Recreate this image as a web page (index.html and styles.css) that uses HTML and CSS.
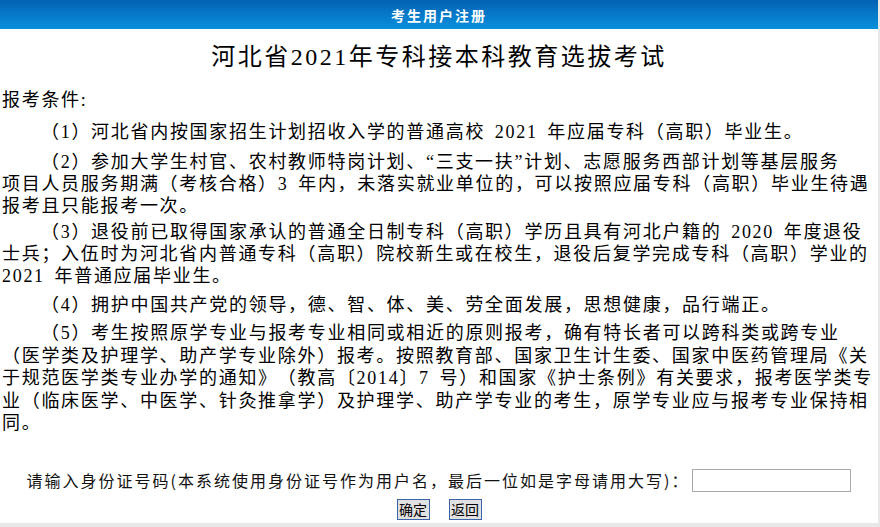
FILE: index.html
```html
<!DOCTYPE html>
<html lang="zh-CN">
<head>
<meta charset="utf-8">
<title>考生用户注册</title>
<link rel="stylesheet" href="styles.css">
</head>
<body>
<div class="page">
  <div class="topbar">考生用户注册</div>
  <h1 class="title">河北省2021年专科接本科教育选拔考试</h1>
  <div class="cond">
    <div class="cond-head">报考条件:</div>
    <p class="p1">（1）河北省内按国家招生计划招收入学的普通高校 2021 年应届专科（高职）毕业生。</p>
    <p class="p2">（2）参加大学生村官、农村教师特岗计划、“三支一扶”计划、志愿服务西部计划等基层服务<br>项目人员服务期满（考核合格）3 年内，未落实就业单位的，可以按照应届专科（高职）毕业生待遇<br>报考且只能报考一次。</p>
    <p class="p3">（3）退役前已取得国家承认的普通全日制专科（高职）学历且具有河北户籍的 2020 年度退役<br>士兵；入伍时为河北省内普通专科（高职）院校新生或在校生，退役后复学完成专科（高职）学业的<br>2021 年普通应届毕业生。</p>
    <p class="p4">（4）拥护中国共产党的领导，德、智、体、美、劳全面发展，思想健康，品行端正。</p>
    <p class="p5">（5）考生按照原学专业与报考专业相同或相近的原则报考，确有特长者可以跨科类或跨专业<br>（医学类及护理学、助产学专业除外）报考。按照教育部、国家卫生计生委、国家中医药管理局《关<br>于规范医学类专业办学的通知》（教高〔2014〕7 号）和国家《护士条例》有关要求，报考医学类专<br>业（临床医学、中医学、针灸推拿学）及护理学、助产学专业的考生，原学专业应与报考专业保持相<br>同。</p>
  </div>
  <form class="reg" onsubmit="return false">
    <div class="reg-row">
      <label class="reg-label" for="sfz">请输入身份证号码(本系统使用身份证号作为用户名，最后一位如是字母请用大写)：</label>
      <input class="reg-input" id="sfz" type="text">
    </div>
    <div class="reg-btns">
      <button class="btn" type="button">确定</button>
      <button class="btn" type="button">返回</button>
    </div>
  </form>
</div>
</body>
</html>
```

FILE: styles.css
```css
html, body {
  margin: 0;
  padding: 0;
}
body {
  background: #e8e8e8;
  width: 880px;
  height: 527px;
  overflow: hidden;
  text-spacing-trim: space-all;
}
.page {
  width: 878px;
  height: 523px;
  background: #ffffff;
  color: #000;
  text-spacing-trim: space-all;
}
.topbar {
  box-sizing: border-box;
  height: 29px;
  padding-top: 2px;
  background: linear-gradient(#0561b4, #0890dc);
  color: #fff;
  font: bold 14px/27px "Noto Sans CJK SC", sans-serif;
  letter-spacing: 2px;
  text-align: center;
}
.title {
  margin: 11px 0 0;
  font: 400 24px/34px "Liberation Serif", "Noto Sans CJK SC", serif;
  letter-spacing: 2.5px;
  text-align: center;
}
.cond {
  margin-top: 15px;
  padding: 0 2px;
  font: 18px/22px "Liberation Serif", "Noto Sans CJK SC", serif;
  letter-spacing: 1.7px;
  word-spacing: 3.5px;
}
.cond p {
  margin: 0;
  white-space: nowrap;
  text-indent: 39px;
}
.cond .p1 { margin-top: 10px; }
.cond .p2 { margin-top: 8px; }
.cond .p3 { margin-top: 4px; }
.cond .p4 { margin-top: 7px; }
.cond .p5 { margin-top: 6px; line-height: 22.5px; }

.reg {
  margin: 34px 0 0;
}
.reg-row {
  display: flex;
  justify-content: center;
  align-items: center;
  gap: 3px;
}
.reg-label {
  font: 16px/23px "Noto Sans CJK SC", sans-serif;
  letter-spacing: 2px;
  color: #111;
}
.reg-input {
  box-sizing: border-box;
  width: 159px;
  height: 23px;
  margin: 0;
  border: 1px solid #a9a9a9;
  padding: 0 3px;
  background: #fff;
}
.reg-btns {
  margin-top: 7px;
  display: flex;
  justify-content: center;
  gap: 19px;
}
.btn {
  box-sizing: border-box;
  width: 33px;
  height: 21px;
  margin: 0;
  padding: 0;
  border: 1px solid #3a63a8;
  border-radius: 0;
  background: #e1e1e1;
  color: #000;
  font: 14px/19px "Noto Sans CJK SC", sans-serif;
}
```
